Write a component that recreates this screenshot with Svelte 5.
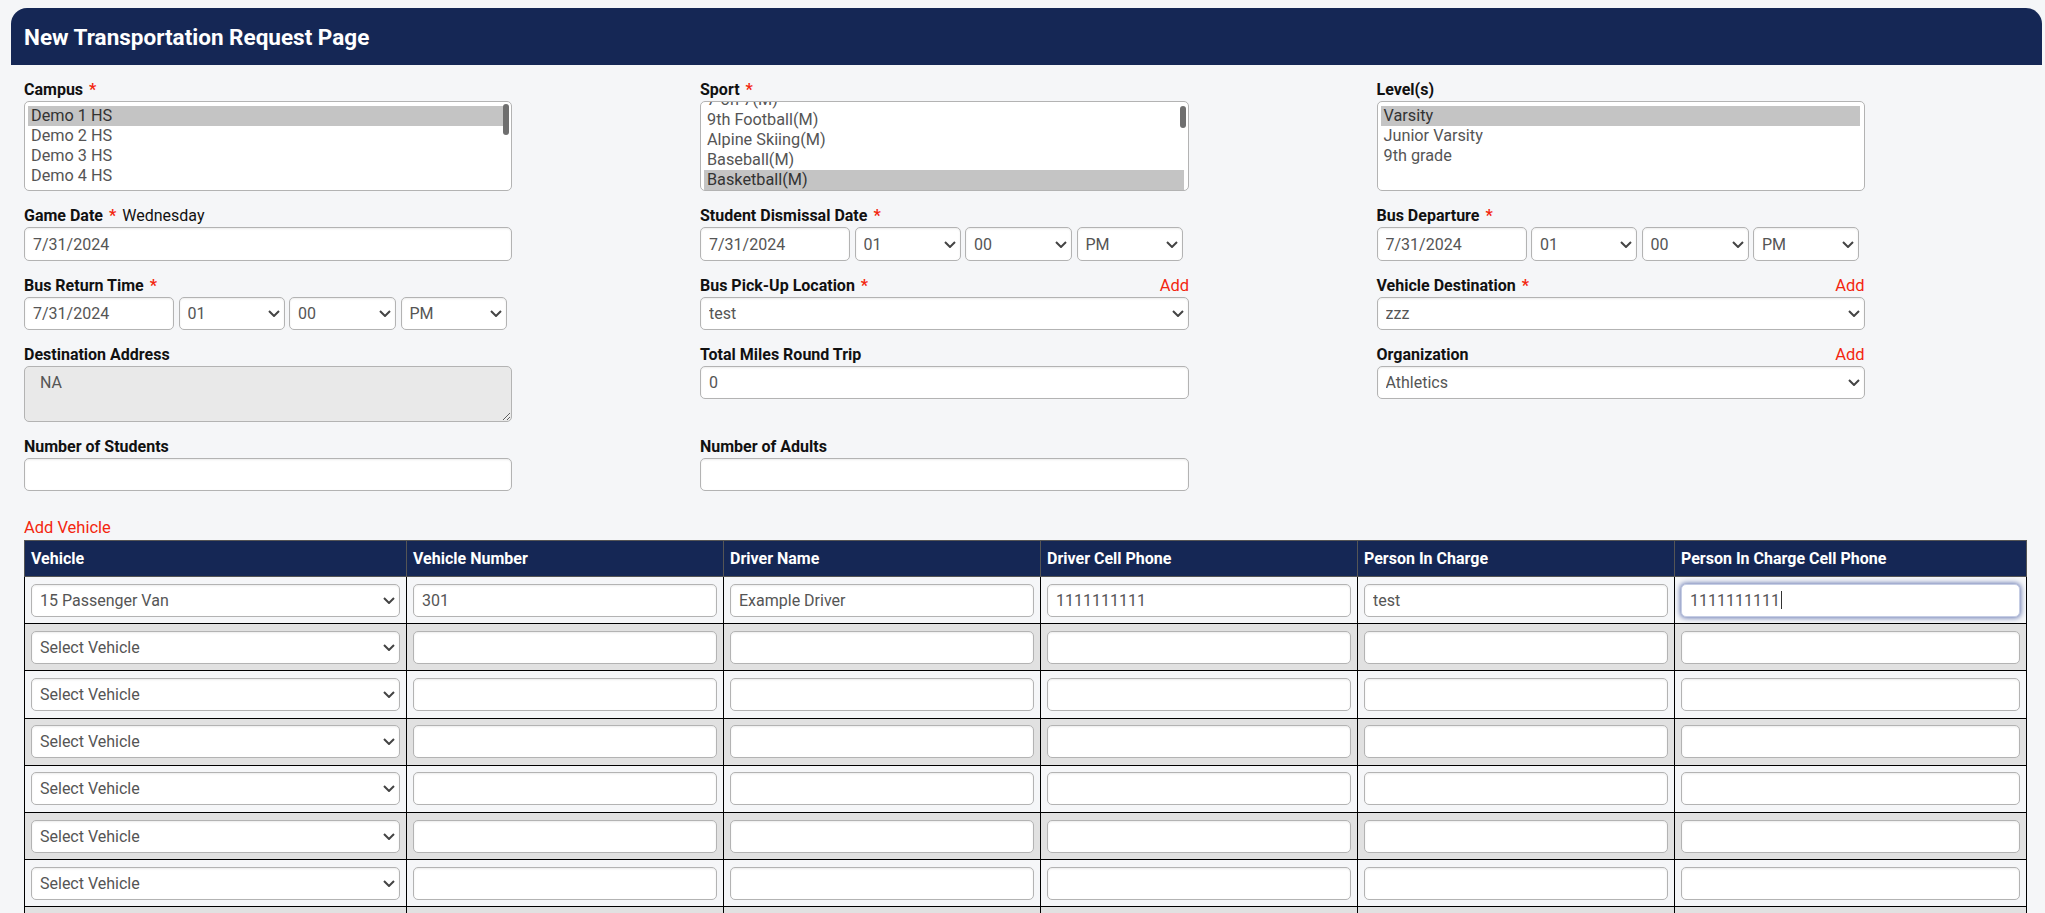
<script>
  const hours = ['01', '02', '03'];
  const minutes = ['00', '15', '30', '45'];
  const ampm = ['PM', 'AM'];

  const campuses = ['Demo 1 HS', 'Demo 2 HS', 'Demo 3 HS', 'Demo 4 HS'];
  const sports = ['7-on-7(M)', '9th Football(M)', 'Alpine Skiing(M)', 'Baseball(M)', 'Basketball(M)'];
  const levels = ['Varsity', 'Junior Varsity', '9th grade'];

  const vehicles = [
    { vehicle: '15 Passenger Van', number: '301', driver: 'Example Driver', phone: '1111111111', person: 'test', personPhone: '1111111111' },
  ];
  for (let i = 0; i < 9; i++) {
    vehicles.push({ vehicle: 'Select Vehicle', number: '', driver: '', phone: '', person: '', personPhone: '' });
  }
  const vehicleOptions = ['Select Vehicle', '15 Passenger Van'];
</script>

{#snippet req(text)}
  <span>{text}<span class="star">*</span></span>
{/snippet}

{#snippet datetime(short)}
  <div class="datetime" class:short>
    <input class="control date" type="text" value="7/31/2024" />
    <select class="control hour">{#each hours as h}<option>{h}</option>{/each}</select>
    <select class="control minute">{#each minutes as m}<option>{m}</option>{/each}</select>
    <select class="control hour">{#each ampm as a}<option>{a}</option>{/each}</select>
  </div>
{/snippet}

{#snippet listbox(options, selected, scrolled)}
  <div class="listbox" class:scrolled>
    {#each options as opt}
      <div class="option" class:selected={opt === selected}>{opt}</div>
    {/each}
    {#if options.length > 3}<div class="thumb" class:short={scrolled}></div>{/if}
  </div>
{/snippet}

<div class="page">
  <div class="title">New Transportation Request Page</div>

  <div class="form">
    <div class="field">
      <div class="label">{@render req('Campus')}</div>
      {@render listbox(campuses, 'Demo 1 HS', false)}
    </div>
    <div class="field">
      <div class="label">{@render req('Sport')}</div>
      {@render listbox(sports, 'Basketball(M)', true)}
    </div>
    <div class="field">
      <div class="label">Level(s)</div>
      {@render listbox(levels, 'Varsity', false)}
    </div>

    <div class="field">
      <div class="label"><span>{@render req('Game Date')}<span class="day">Wednesday</span></span></div>
      <input class="control tall" type="text" value="7/31/2024" />
    </div>
    <div class="field">
      <div class="label">{@render req('Student Dismissal Date')}</div>
      {@render datetime(false)}
    </div>
    <div class="field">
      <div class="label">{@render req('Bus Departure')}</div>
      {@render datetime(false)}
    </div>

    <div class="field">
      <div class="label">{@render req('Bus Return Time')}</div>
      {@render datetime(true)}
    </div>
    <div class="field">
      <div class="label">{@render req('Bus Pick-Up Location')}<a class="add" href="#add">Add</a></div>
      <select class="control"><option>test</option></select>
    </div>
    <div class="field">
      <div class="label">{@render req('Vehicle Destination')}<a class="add" href="#add">Add</a></div>
      <select class="control"><option>zzz</option></select>
    </div>

    <div class="field">
      <div class="label">Destination Address</div>
      <textarea class="address" disabled>NA</textarea>
    </div>
    <div class="field">
      <div class="label">Total Miles Round Trip</div>
      <input class="control" type="text" value="0" />
    </div>
    <div class="field">
      <div class="label">Organization<a class="add" href="#add">Add</a></div>
      <select class="control"><option>Athletics</option></select>
    </div>

    <div class="field">
      <div class="label">Number of Students</div>
      <input class="control" type="text" />
    </div>
    <div class="field">
      <div class="label">Number of Adults</div>
      <input class="control" type="text" />
    </div>
  </div>

  <div class="vehicles">
    <a class="add-vehicle" href="#add">Add Vehicle</a>
    <table>
      <thead>
        <tr>
          <th>Vehicle</th>
          <th>Vehicle Number</th>
          <th>Driver Name</th>
          <th>Driver Cell Phone</th>
          <th>Person In Charge</th>
          <th>Person In Charge Cell Phone</th>
        </tr>
      </thead>
      <tbody>
        {#each vehicles as row, i}
          <tr>
            <td>
              <select class="control" value={row.vehicle}>
                {#each vehicleOptions as v}<option>{v}</option>{/each}
              </select>
            </td>
            <td><input class="control" type="text" value={row.number} /></td>
            <td><input class="control" type="text" value={row.driver} /></td>
            <td><input class="control" type="text" value={row.phone} /></td>
            <td><input class="control" type="text" value={row.person} /></td>
            <td class="last">
              <input class="control" class:focused={i === 0} type="text" value={row.personPhone} />
              {#if i === 0}<span class="caret"></span>{/if}
            </td>
          </tr>
        {/each}
      </tbody>
    </table>
  </div>
</div>

<style>
  :global(body) {
    margin: 0;
    height: 913px;
    overflow: hidden;
    background: #f5f6f8;
    font-family: Roboto, "Liberation Sans", sans-serif;
  }
  .page {
    padding: 8px 3px 0 11px;
  }
  .title {
    height: 57px;
    box-sizing: border-box;
    padding-left: 13px;
    display: flex;
    align-items: center;
    background: #152755;
    color: #fff;
    font-size: 22.5px;
    font-weight: 700;
    border-radius: 16px 16px 0 0;
  }
  .form {
    display: grid;
    grid-template-columns: 676px 676.5px 1fr;
    row-gap: 15px;
    padding: 15px 0 0 13px;
  }
  .field {
    width: 488px;
  }
  .field:nth-child(3n + 2) {
    width: 489px;
  }
  .label {
    display: flex;
    justify-content: space-between;
    height: 18px;
    line-height: 20px;
    margin-bottom: 3px;
    font-size: 16px;
    font-weight: 700;
    color: #111;
  }
  .star {
    color: #f3260f;
    margin-left: 6px;
  }
  .day {
    margin-left: 6px;
    font-weight: 400;
  }
  .add {
    color: #f3260f;
    font-size: 16.5px;
    font-weight: 400;
    text-decoration: none;
  }
  .control {
    display: block;
    width: 100%;
    height: 33px;
    box-sizing: border-box;
    padding: 0 8px;
    font-family: inherit;
    font-size: 16px;
    color: #555;
    background-color: #fff;
    border: 1px solid #b3b3b3;
    border-radius: 5px;
    box-shadow: inset 0 1px 2px rgba(0, 0, 0, 0.08);
    outline: none;
  }
  .tall {
    height: 34px;
  }
  select.control {
    appearance: none;
    padding-left: 8px;
    background-image: url("data:image/svg+xml,%3Csvg xmlns='http://www.w3.org/2000/svg' width='12' height='7' viewBox='0 0 12 7'%3E%3Cpath d='M1 1l5 5 5-5' fill='none' stroke='%23444' stroke-width='2'/%3E%3C/svg%3E");
    background-repeat: no-repeat;
    background-position: right 4px center;
  }
  .datetime {
    display: flex;
    gap: 4.5px;
  }
  .datetime .control {
    height: 34px;
  }
  .datetime.short .control {
    height: 33px;
  }
  .date {
    width: 150px;
  }
  .hour {
    width: 106px;
  }
  .minute {
    width: 107px;
  }
  .listbox {
    position: relative;
    height: 90px;
    box-sizing: border-box;
    overflow: hidden;
    padding: 4px 4px 4px 3px;
    background: #fff;
    border: 1px solid #b3b3b3;
    border-radius: 5px;
    font-size: 16.25px;
    color: #555;
  }
  .listbox.scrolled {
    padding-top: 0;
  }
  .listbox.scrolled .option:first-child {
    margin-top: -12px;
  }
  .option {
    height: 20px;
    line-height: 20px;
    padding-left: 3px;
    white-space: nowrap;
  }
  .selected {
    background: #c4c4c4;
    color: #333;
  }
  .thumb {
    position: absolute;
    top: 2px;
    right: 2px;
    width: 6.5px;
    height: 31px;
    border-radius: 3px;
    background: #6f6f6f;
  }
  .thumb.short {
    top: 4px;
    height: 22px;
  }
  .address {
    display: block;
    width: 100%;
    height: 56px;
    box-sizing: border-box;
    padding: 6px 15px;
    font-family: inherit;
    font-size: 16px;
    color: #555;
    background: #e9e9e9;
    border: 1px solid #b3b3b3;
    border-radius: 5px;
    resize: vertical;
    opacity: 1;
  }
  .vehicles {
    padding: 27px 0 0 13px;
  }
  .add-vehicle {
    display: block;
    height: 18px;
    line-height: 20px;
    margin-bottom: 4px;
    font-size: 16.5px;
    color: #f3260f;
    text-decoration: none;
  }
  table {
    width: 2003px;
    table-layout: fixed;
    border-collapse: collapse;
  }
  th {
    height: 36px;
    box-sizing: border-box;
    padding: 0 6px;
    text-align: left;
    font-size: 16px;
    font-weight: 700;
    color: #fff;
    background: #152755;
    border: 1px solid #555;
  }
  th:nth-child(1) {
    width: 382px;
  }
  th:nth-child(n + 2):nth-child(-n + 5) {
    width: 317px;
  }
  td {
    height: 47.2px;
    box-sizing: border-box;
    padding: 0 6px;
    border: 1px solid #000;
  }
  tbody tr:nth-child(odd) {
    background: #f5f6f8;
  }
  tbody tr:nth-child(even) {
    background: #e1e1e1;
  }
  .last {
    position: relative;
  }
  .focused {
    border-color: #c5cde4;
    box-shadow: 0 0 5px 1px rgba(70, 90, 160, 0.8);
  }
  .caret {
    position: absolute;
    left: 106px;
    top: 14px;
    width: 1px;
    height: 18px;
    background: #333;
  }
</style>
